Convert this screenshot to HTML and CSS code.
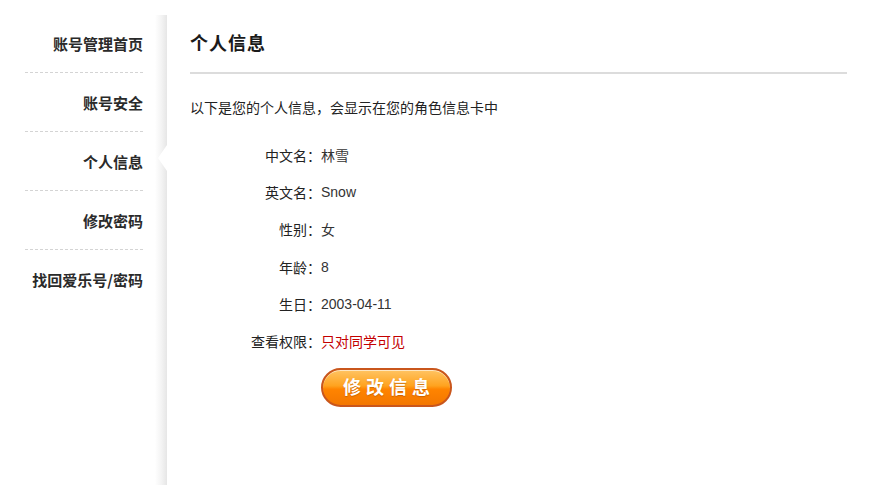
FILE: index.html
```html
<!DOCTYPE html>
<html lang="zh-CN">
<head>
    <meta charset="UTF-8">
    <title>个人信息</title>
    <link rel="stylesheet" href="styles.css">
</head>
<body>
    <div class="page">
        <div class="sidebar">
            <ul class="side-nav">
                <li><a href="#">账号管理首页</a></li>
                <li><a href="#">账号安全</a></li>
                <li class="current"><a href="#">个人信息</a></li>
                <li><a href="#">修改密码</a></li>
                <li><a href="#">找回爱乐号/密码</a></li>
            </ul>
            <div class="side-edge">
                <span class="side-arrow"></span>
            </div>
        </div>

        <div class="main">
            <h2 class="main-title">个人信息</h2>
            <p class="intro">以下是您的个人信息，会显示在您的角色信息卡中</p>
            <div class="info-list">
                <div class="info-row"><span class="label">中文名：</span><span class="value">林雪</span></div>
                <div class="info-row"><span class="label">英文名：</span><span class="value latin">Snow</span></div>
                <div class="info-row"><span class="label">性别：</span><span class="value">女</span></div>
                <div class="info-row"><span class="label">年龄：</span><span class="value latin">8</span></div>
                <div class="info-row"><span class="label">生日：</span><span class="value latin">2003-04-11</span></div>
                <div class="info-row"><span class="label">查看权限：</span><span class="value red">只对同学可见</span></div>
            </div>
            <div class="actions">
                <a class="edit-btn" href="#">修改信息</a>
            </div>
        </div>
    </div>
</body>
</html>
```

FILE: styles.css
```css
body {
    margin: 0;
    padding: 0;
    background-color: #fff;
    font-family: "Noto Sans CJK SC", "Liberation Sans", sans-serif;
    color: #222;
}
.page {
    display: flex;
    min-height: 485px;
}
.sidebar {
    display: flex;
    width: 167px;
    flex-shrink: 0;
}
.side-nav {
    list-style: none;
    margin: 0;
    padding: 14px 0 0 25px;
    width: 118px;
}
.side-nav li {
    height: 58px;
    border-bottom: 1px dashed #d4d4d4;
    display: flex;
    align-items: center;
    justify-content: flex-end;
}
.side-nav li:last-child {
    border-bottom: none;
}
.side-nav a {
    font-size: 15px;
    font-weight: bold;
    color: #2a2a2a;
    text-decoration: none;
    white-space: nowrap;
}
.side-edge {
    position: relative;
    width: 12px;
    margin-left: 12px;
    margin-top: 15px;
    background: linear-gradient(to right, #ffffff, #f3f3f3 55%, #e6e6e6);
}
.side-arrow {
    position: absolute;
    left: 3px;
    top: 130px;
    width: 0;
    height: 0;
    border-top: 13px solid transparent;
    border-bottom: 13px solid transparent;
    border-right: 9px solid #fff;
}
.main {
    flex: 1;
    padding: 0 29px 0 23px;
}
.main-title {
    margin: 0;
    height: 72px;
    line-height: 84px;
    font-size: 18px;
    font-weight: bold;
    letter-spacing: 1px;
    color: #1a1a1a;
    border-bottom: 2px solid #dcdcdc;
}
.intro {
    margin: 0;
    padding-top: 23px;
    font-size: 14px;
    line-height: 20px;
    color: #222;
}
.info-list {
    padding-top: 19px;
}
.info-row {
    display: flex;
    height: 37.3px;
    align-items: center;
    font-size: 14px;
}
.label {
    width: 131px;
    text-align: right;
    color: #222;
}
.value {
    color: #333;
}
.latin {
    font-family: "Liberation Sans", Arial, sans-serif;
    font-size: 14px;
}
.red {
    color: #c40000;
}
.actions {
    padding: 8px 0 0 131px;
}
.edit-btn {
    display: inline-block;
    width: 127px;
    height: 35px;
    line-height: 33px;
    text-align: center;
    border: 2px solid #c9561c;
    border-radius: 20px;
    background: linear-gradient(to bottom, #ffc463 0%, #ffa31f 45%, #ff8400 55%, #f37700 100%);
    box-shadow: inset 0 1px 0 rgba(255, 255, 255, 0.6);
    color: #fff;
    font-size: 18px;
    font-weight: bold;
    letter-spacing: 5px;
    text-indent: 5px;
    text-decoration: none;
    text-shadow: 0 1px 1px rgba(160, 70, 0, 0.5);
}
```
